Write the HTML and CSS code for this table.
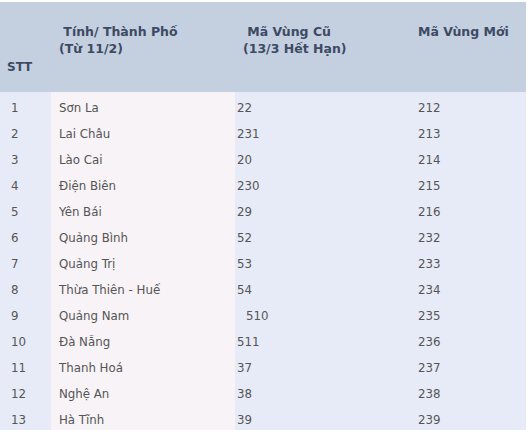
FILE: index.html
```html
<!DOCTYPE html>
<html lang="vi">
<head>
<meta charset="utf-8">
<link rel="stylesheet" href="styles.css">
</head>
<body>
<table class="codes">
  <colgroup>
    <col class="c1"><col class="c2"><col class="c3"><col class="c4">
  </colgroup>
  <thead>
    <tr>
      <th class="h-stt">STT</th>
      <th class="h-top">&nbsp;Tính/ Thành Phố<br>(Từ 11/2)</th>
      <th class="h-top">&nbsp;Mã Vùng Cũ<br>(13/3 Hết Hạn)</th>
      <th class="h-top">Mã Vùng Mới</th>
    </tr>
  </thead>
  <tbody>
    <tr><td class="stt">1</td><td class="name">Sơn La</td><td class="old">22</td><td class="new">212</td></tr>
    <tr><td class="stt">2</td><td class="name">Lai Châu</td><td class="old">231</td><td class="new">213</td></tr>
    <tr><td class="stt">3</td><td class="name">Lào Cai</td><td class="old">20</td><td class="new">214</td></tr>
    <tr><td class="stt">4</td><td class="name">Điện Biên</td><td class="old">230</td><td class="new">215</td></tr>
    <tr><td class="stt">5</td><td class="name">Yên Bái</td><td class="old">29</td><td class="new">216</td></tr>
    <tr><td class="stt">6</td><td class="name">Quảng Bình</td><td class="old">52</td><td class="new">232</td></tr>
    <tr><td class="stt">7</td><td class="name">Quảng Trị</td><td class="old">53</td><td class="new">233</td></tr>
    <tr><td class="stt">8</td><td class="name">Thừa Thiên - Huế</td><td class="old">54</td><td class="new">234</td></tr>
    <tr><td class="stt">9</td><td class="name">Quảng Nam</td><td class="old old-indent">510</td><td class="new">235</td></tr>
    <tr><td class="stt">10</td><td class="name">Đà Nẵng</td><td class="old">511</td><td class="new">236</td></tr>
    <tr><td class="stt">11</td><td class="name">Thanh Hoá</td><td class="old">37</td><td class="new">237</td></tr>
    <tr><td class="stt">12</td><td class="name">Nghệ An</td><td class="old">38</td><td class="new">238</td></tr>
    <tr><td class="stt">13</td><td class="name">Hà Tĩnh</td><td class="old">39</td><td class="new">239</td></tr>
  </tbody>
</table>
</body>
</html>
```

FILE: styles.css
```css
html, body {
  margin: 0;
  padding: 0;
  background: #ffffff;
}
body {
  padding-top: 2px;
}
.codes {
  width: 526px;
  border-collapse: collapse;
  border-spacing: 0;
  table-layout: fixed;
  font-family: "DejaVu Sans", Verdana, sans-serif;
}
.c1 { width: 51px; }
.c2 { width: 184px; }
.c3 { width: 175px; }
.c4 { width: 116px; }

thead th {
  background: #c4d0e0;
  color: #3d4a63;
  font-size: 12.5px;
  font-weight: bold;
  text-align: left;
  height: 90px;
  padding: 0 0 0 8px;
  line-height: 17px;
  box-sizing: border-box;
}
.h-stt {
  vertical-align: bottom;
  padding-left: 7px;
  padding-bottom: 16px;
  font-size: 12px;
}
.h-top {
  vertical-align: top;
  padding-top: 21px;
}

tbody td {
  height: 26px;
  padding: 5px 0 0 0;
  box-sizing: border-box;
  font-size: 11.8px;
  line-height: 14px;
  color: #555555;
  background: #e7ebf7;
  vertical-align: middle;
  white-space: nowrap;
}
.stt { padding-left: 11px; }
.name {
  background: #f7f3f7;
  padding-left: 8px;
}
.old { padding-left: 2px; }
.old-indent { padding-left: 11px; }
.new { padding-left: 8px; }
```
